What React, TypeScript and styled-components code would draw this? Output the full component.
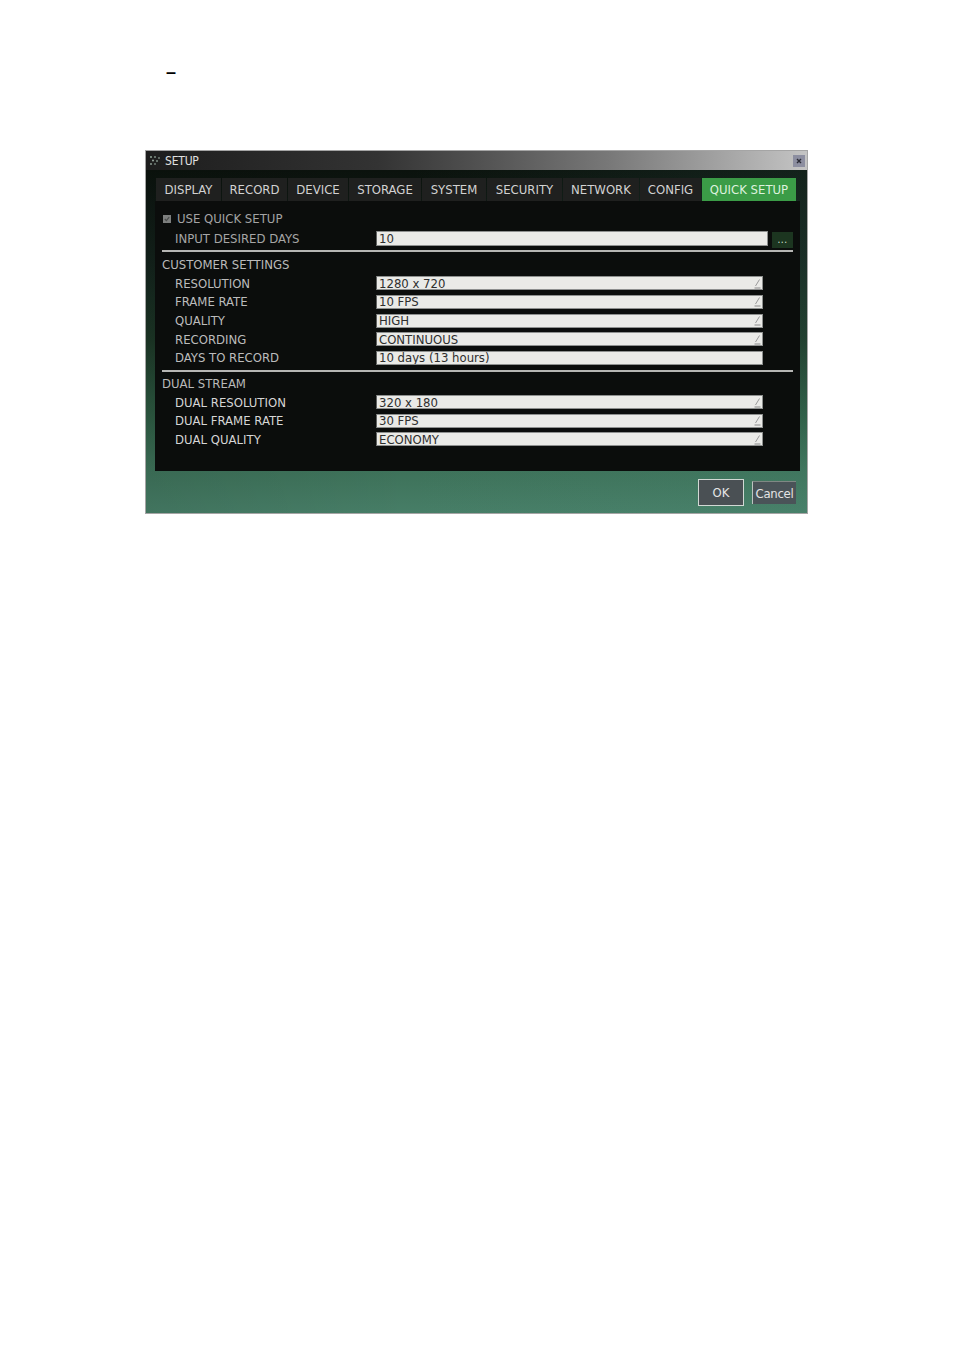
import React from 'react';
import styled, { createGlobalStyle } from 'styled-components';

const Global = createGlobalStyle`
  html, body { margin: 0; padding: 0; background: #ffffff; }
  body { width: 954px; min-height: 1350px; font-family: "Liberation Sans", Arial, sans-serif; }
`;

const UI = `"DejaVu Sans Condensed", "Liberation Sans Narrow", "Liberation Sans", sans-serif`;

const Page = styled.div`
  width: 954px;
  height: 1350px;
  box-sizing: border-box;
  padding-top: 62px;
  display: flex;
  flex-direction: column;
`;

const Dash = styled.div`
  margin-left: 166px;
  height: 20px;
  line-height: 20px;
  font: bold 18px "Liberation Sans", Arial, sans-serif;
  color: #000;
`;

const Window = styled.div`
  margin: 68px 0 0 145px;
  width: 663px;
  height: 364px;
  box-sizing: border-box;
  border: 1px solid #a5a5a5;
  display: flex;
  flex-direction: column;
  font-family: ${UI};
`;

const TitleBar = styled.div`
  height: 19px;
  flex: none;
  display: flex;
  align-items: center;
  gap: 3px;
  padding: 0 2px 0 3px;
  background: linear-gradient(to right, #1d1d1d 0%, #333333 35%, #787878 70%, #c4c4c4 100%);
  color: #e0e0e0;
  font-size: 12px;
`;

const TitleText = styled.span`
  letter-spacing: -0.2px;
`;

const CloseBox = styled.div`
  margin-left: auto;
  width: 12px;
  height: 12px;
  background: #8c8ea0;
  display: flex;
  align-items: center;
  justify-content: center;
`;

const Body = styled.div`
  flex: 1;
  display: flex;
  flex-direction: column;
  padding: 8px 7px 7px 9px;
  background:
    linear-gradient(to right, rgba(0, 0, 0, 0.08) 0%, rgba(0, 0, 0, 0) 40%, rgba(80, 150, 130, 0.12) 100%),
    linear-gradient(to bottom, #0b120d 0%, #12201a 25%, #1c3626 50%, #2d5a42 72%, #3e725a 88%, #477e67 100%);
`;

const Tabs = styled.div`
  display: flex;
  gap: 1px;
  padding-left: 1px;
  height: 23px;
  flex: none;
`;

const Tab = styled.div<{ $w: number; $active?: boolean }>`
  width: ${(p) => p.$w}px;
  height: 23px;
  display: flex;
  align-items: center;
  justify-content: center;
  background: ${(p) => (p.$active ? '#3b9c47' : '#1f201f')};
  color: ${(p) => (p.$active ? '#def2de' : '#d2d2d2')};
  font-size: 13px;
`;

const Panel = styled.div`
  height: 270px;
  flex: none;
  box-sizing: border-box;
  background: #0b0d0c;
  padding: 8.7px 7px 0 7px;
  display: flex;
  flex-direction: column;
`;

const Row = styled.div<{ $h?: number }>`
  height: ${(p) => p.$h ?? 18.6}px;
  flex: none;
  display: flex;
  align-items: center;
`;

const Label = styled.div<{ $tone?: 'dim' | 'mid' | 'bright' }>`
  width: 214px;
  box-sizing: border-box;
  padding-left: 13px;
  font-size: 13px;
  color: ${(p) => (p.$tone === 'dim' ? '#a6a6a6' : p.$tone === 'bright' ? '#d6d6d6' : '#bcbcbc')};
  white-space: nowrap;
`;

const Heading = styled.div`
  font-size: 13px;
  color: #bababa;
`;

const CheckWrap = styled.div`
  display: flex;
  align-items: center;
  gap: 6px;
  padding-left: 1px;
  font-size: 13px;
  color: #a4a4a4;
`;

const CheckBox = styled.div`
  width: 8px;
  height: 8px;
  background: #7d7f7e;
  display: flex;
  align-items: center;
  justify-content: center;
`;

const Field = styled.div<{ $w: number; $h?: number }>`
  width: ${(p) => p.$w}px;
  height: ${(p) => p.$h ?? 14}px;
  box-sizing: border-box;
  border: 1px solid #8e908f;
  border-left-color: #5f6160;
  background: #eaeae7;
  color: #2e2e2e;
  font-size: 13px;
  display: flex;
  align-items: center;
  padding: 0 1px 0 2px;
  white-space: nowrap;
  overflow: hidden;
`;

const FieldText = styled.span`
  flex: 1;
`;

const DotsButton = styled.div`
  margin-left: 4px;
  width: 21px;
  height: 16px;
  margin-top: 2px;
  background: #1c3520;
  color: #d8e6d8;
  font-size: 10px;
  display: flex;
  align-items: center;
  justify-content: center;
  letter-spacing: 0.5px;
`;

const Rule = styled.div<{ $mt: number; $mb: number }>`
  height: 2px;
  flex: none;
  background: #b6b6b4;
  margin-top: ${(p) => p.$mt}px;
  margin-bottom: ${(p) => p.$mb}px;
`;

const Footer = styled.div`
  margin-top: 8px;
  height: 27px;
  flex: none;
  display: flex;
  justify-content: flex-end;
  align-items: center;
  gap: 8px;
  padding-right: 4px;
`;

const OkButton = styled.div`
  width: 46px;
  height: 27px;
  box-sizing: border-box;
  border: 1px solid #d2d8d4;
  background: #4a5054;
  color: #e6e6e6;
  font-size: 13px;
  display: flex;
  align-items: center;
  justify-content: center;
`;

const CancelButton = styled.div`
  width: 44px;
  height: 23px;
  box-sizing: border-box;
  border-left: 1px solid #bcc4c0;
  border-top: 1px solid #7f8884;
  background: #4a5358;
  color: #e4e4e4;
  font-size: 13px;
  letter-spacing: -0.3px;
  display: flex;
  align-items: center;
  justify-content: center;
`;

const DropArrow = () => (
  <svg width="7" height="11" viewBox="0 0 7 11">
    <line x1="1.5" y1="8" x2="5.5" y2="1.5" stroke="#9a9a9a" strokeWidth="1" />
    <line x1="0.5" y1="10" x2="6.5" y2="10" stroke="#8a8a8a" strokeWidth="1" />
  </svg>
);

const SetupIcon = () => (
  <svg width="13" height="11" viewBox="0 0 13 11">
    <circle cx="2" cy="2" r="1" fill="#8fa496" />
    <circle cx="6" cy="2" r="1" fill="#7d8c83" />
    <circle cx="10" cy="3" r="1" fill="#6f7d74" />
    <circle cx="4" cy="5.5" r="1" fill="#9aa9a0" />
    <circle cx="8" cy="6" r="1" fill="#7d8c83" />
    <circle cx="2" cy="9" r="1" fill="#88978e" />
    <circle cx="6" cy="9" r="1" fill="#6f7d74" />
  </svg>
);

const tabs: { name: string; w: number; active?: boolean }[] = [
  { name: 'DISPLAY', w: 65 },
  { name: 'RECORD', w: 65 },
  { name: 'DEVICE', w: 60 },
  { name: 'STORAGE', w: 72 },
  { name: 'SYSTEM', w: 64 },
  { name: 'SECURITY', w: 75 },
  { name: 'NETWORK', w: 76 },
  { name: 'CONFIG', w: 61 },
  { name: 'QUICK SETUP', w: 94, active: true },
];

const customer = [
  { label: 'RESOLUTION', value: '1280 x 720', drop: true },
  { label: 'FRAME RATE', value: '10 FPS', drop: true },
  { label: 'QUALITY', value: 'HIGH', drop: true },
  { label: 'RECORDING', value: 'CONTINUOUS', drop: true },
  { label: 'DAYS TO RECORD', value: '10 days (13 hours)', drop: false },
];

const dual = [
  { label: 'DUAL RESOLUTION', value: '320 x 180' },
  { label: 'DUAL FRAME RATE', value: '30 FPS' },
  { label: 'DUAL QUALITY', value: 'ECONOMY' },
];

export default function App() {
  return (
    <>
      <Global />
      <Page>
        <Dash>–</Dash>
        <Window>
          <TitleBar>
            <SetupIcon />
            <TitleText>SETUP</TitleText>
            <CloseBox>
              <svg width="6" height="6" viewBox="0 0 6 6">
                <path d="M1 1 L5 5 M5 1 L1 5" stroke="#2a2a35" strokeWidth="1.4" />
              </svg>
            </CloseBox>
          </TitleBar>
          <Body>
            <Tabs>
              {tabs.map((t) => (
                <Tab key={t.name} $w={t.w} $active={t.active}>
                  {t.name}
                </Tab>
              ))}
            </Tabs>
            <Panel>
              <Row>
                <CheckWrap>
                  <CheckBox>
                    <svg width="6" height="6" viewBox="0 0 6 6">
                      <path d="M0.8 3 L2.4 4.6 L5.2 1.2" stroke="#4a4c4b" strokeWidth="1.2" fill="none" />
                    </svg>
                  </CheckBox>
                  USE QUICK SETUP
                </CheckWrap>
              </Row>
              <Row $h={21}>
                <Label $tone="dim">INPUT DESIRED DAYS</Label>
                <Field $w={392} $h={15}>
                  <FieldText>10</FieldText>
                </Field>
                <DotsButton>...</DotsButton>
              </Row>
              <Rule $mt={0.4} $mb={3.75} />
              <Row>
                <Heading>CUSTOMER SETTINGS</Heading>
              </Row>
              {customer.map((r) => (
                <Row key={r.label}>
                  <Label>{r.label}</Label>
                  <Field $w={387}>
                    <FieldText>{r.value}</FieldText>
                    {r.drop && <DropArrow />}
                  </Field>
                </Row>
              ))}
              <Rule $mt={2.65} $mb={2.7} />
              <Row>
                <Heading>DUAL STREAM</Heading>
              </Row>
              {dual.map((r) => (
                <Row key={r.label}>
                  <Label $tone="bright">{r.label}</Label>
                  <Field $w={387}>
                    <FieldText>{r.value}</FieldText>
                    <DropArrow />
                  </Field>
                </Row>
              ))}
            </Panel>
            <Footer>
              <OkButton>OK</OkButton>
              <CancelButton>Cancel</CancelButton>
            </Footer>
          </Body>
        </Window>
      </Page>
    </>
  );
}
